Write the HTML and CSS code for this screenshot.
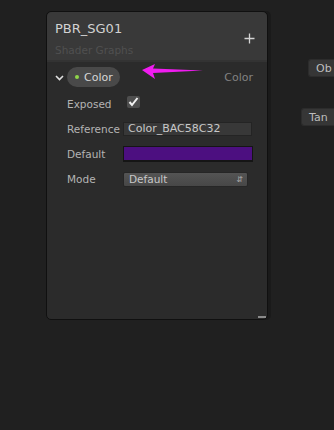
FILE: index.html
```html
<!DOCTYPE html>
<html lang="en">
<head>
    <meta charset="UTF-8">
    <title>Blackboard</title>
    <link rel="stylesheet" href="styles.css">
</head>
<body>

    <div class="canvas">

        <!-- Blackboard panel -->
        <div class="blackboard">
            <div class="bb-header">
                <div class="bb-titles">
                    <div class="bb-title">PBR_SG01</div>
                    <div class="bb-subtitle">Shader Graphs</div>
                </div>
                <svg class="bb-add" width="11" height="11" viewBox="0 0 11 11">
                    <path d="M5.5 0.5 V10.5 M0.5 5.5 H10.5" stroke="#d4d4d4" stroke-width="1.3"/>
                </svg>
            </div>

            <div class="bb-body">
                <div class="prop-row">
                    <svg class="chevron" width="9" height="6" viewBox="0 0 9 6">
                        <path d="M1 1 L4.5 4.5 L8 1" fill="none" stroke="#e0e0e0" stroke-width="1.6"/>
                    </svg>
                    <div class="pill"><span class="dot"></span>Color</div>
                    <svg class="arrow" width="64" height="16" viewBox="0 0 64 16">
                        <path d="M1 6 L14 0 L12 4.5 L62 6.5 L12 9 L14 15 Z" fill="#f01cf0"/>
                    </svg>
                    <span class="prop-type">Color</span>
                </div>

                <div class="fields">
                    <div class="field-row">
                        <span class="field-label">Exposed</span>
                        <span class="checkbox">
                            <svg width="11" height="10" viewBox="0 0 11 10">
                                <path d="M1.5 5 L4 8 L9.5 1" fill="none" stroke="#f2f2f2" stroke-width="2"/>
                            </svg>
                        </span>
                    </div>

                    <div class="field-row">
                        <span class="field-label">Reference</span>
                        <span class="text-field">Color_BAC58C32</span>
                    </div>

                    <div class="field-row">
                        <span class="field-label">Default</span>
                        <span class="color-field"></span>
                    </div>

                    <div class="field-row">
                        <span class="field-label">Mode</span>
                        <span class="dropdown">Default<span class="updown">&#8693;</span></span>
                    </div>
                </div>
            </div>
            <div class="resize-grip"></div>
        </div>

        <!-- node ports peeking in from the right -->
        <div class="side-nodes">
            <div class="node-btn node-ob">Ob</div>
            <div class="node-btn node-tan">Tan</div>
        </div>

    </div>

</body>
</html>
```

FILE: styles.css
```css
body {
    margin: 0;
    padding: 0;
    background-color: #202020;
    font-family: 'DejaVu Sans', sans-serif;
    overflow: hidden;
}

.canvas {
    display: flex;
    width: 334px;
    height: 430px;
    padding: 11px 0 0 46px;
    box-sizing: border-box;
}

/* Blackboard panel */
.blackboard {
    width: 220px;
    height: 307px;
    background-color: #2b2b2b;
    border: 1px solid #101010;
    border-radius: 5px;
    box-shadow: 3px 0 0 #1a1a1a;
    display: flex;
    flex-direction: column;
    position: relative;
    flex-shrink: 0;
}

.bb-header {
    background-color: #393939;
    border-radius: 5px 5px 0 0;
    border-bottom: 2px solid #333;
    height: 48px;
    display: flex;
    justify-content: space-between;
    align-items: center;
    padding: 0 12px 0 8px;
}

.bb-title {
    color: #d2d2d2;
    font-size: 13px;
    margin-top: 4px;
}

.bb-subtitle {
    color: #505050;
    font-size: 10.5px;
    margin-top: 8px;
}

.bb-add {
    margin-top: 5px;
}

.bb-body {
    padding: 5px 14px 0 8px;
    flex-grow: 1;
}

.prop-row {
    display: flex;
    align-items: center;
    height: 20px;
}

.chevron {
    margin: 2px 3px 0 0;
}

.pill {
    background-color: #494949;
    border-radius: 10px;
    height: 20px;
    width: 53px;
    box-sizing: border-box;
    padding-left: 8px;
    display: flex;
    align-items: center;
    color: #d6d6d6;
    font-size: 11px;
}

.dot {
    width: 4px;
    height: 4px;
    border-radius: 50%;
    background-color: #8fd64a;
    margin-right: 5px;
}

.arrow {
    margin: -10px 0 0 21px;
}

.prop-type {
    margin-left: auto;
    color: #828282;
    font-size: 11px;
}

.fields {
    margin-top: 4px;
}

.field-row {
    display: flex;
    align-items: center;
    height: 25px;
    padding-left: 12px;
}

.field-label {
    width: 56px;
    color: #b4b4b4;
    font-size: 10.5px;
}

.checkbox {
    width: 13px;
    height: 12px;
    background-color: #4e4e4e;
    border-radius: 2px;
    display: flex;
    align-items: center;
    justify-content: center;
    margin: -3px 0 0 4px;
}

.text-field {
    width: 129px;
    height: 14px;
    box-sizing: border-box;
    background-color: #383838;
    border: 1px solid #242424;
    color: #c8c8c8;
    font-size: 11px;
    line-height: 12px;
    padding-left: 4px;
}

.color-field {
    width: 131px;
    height: 16px;
    box-sizing: border-box;
    background-color: #4c0f80;
    border: 1px solid #151515;
    border-bottom-width: 2px;
}

.dropdown {
    width: 125px;
    height: 15px;
    box-sizing: border-box;
    background: linear-gradient(#545454, #474747);
    border: 1px solid #262626;
    border-radius: 2px;
    color: #c8c8c8;
    font-size: 10.5px;
    line-height: 13px;
    padding-left: 5px;
    display: flex;
    justify-content: space-between;
    margin-top: 1px;
}

.updown {
    font-size: 8px;
    color: #aaa;
    padding-right: 4px;
}

.resize-grip {
    position: absolute;
    right: 1px;
    bottom: 1px;
    width: 8px;
    height: 2px;
    background-color: #8a8a8a;
}

/* right-hand node ports */
.side-nodes {
    display: flex;
    flex-direction: column;
    align-items: flex-end;
    flex-grow: 1;
    padding-top: 48px;
}

.node-btn {
    background-color: #363636;
    border: 1px solid #2c2c2c;
    border-right: none;
    border-radius: 3px 0 0 3px;
    color: #bdbdbd;
    font-size: 11px;
    height: 18px;
    line-height: 18px;
    box-sizing: border-box;
    padding-left: 7px;
    overflow: hidden;
}

.node-ob {
    width: 26px;
}

.node-tan {
    width: 33px;
    margin-top: 31px;
}
```
